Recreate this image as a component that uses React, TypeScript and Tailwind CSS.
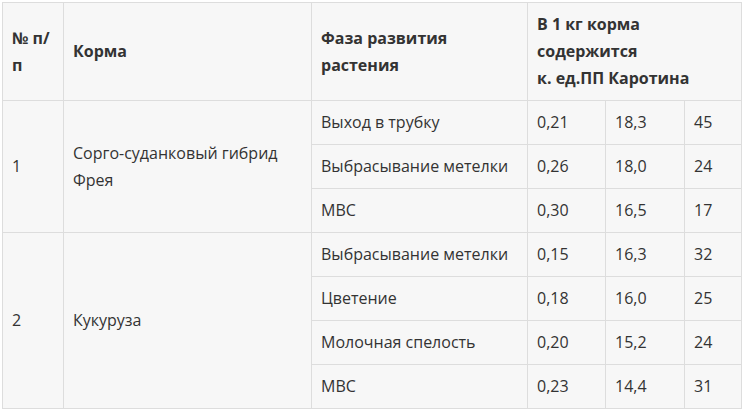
const rows = [
  {
    num: '1',
    name: 'Сорго-суданковый гибрид Фрея',
    phases: [
      ['Выход в трубку', '0,21', '18,3', '45'],
      ['Выбрасывание метелки', '0,26', '18,0', '24'],
      ['МВС', '0,30', '16,5', '17'],
    ],
  },
  {
    num: '2',
    name: 'Кукуруза',
    phases: [
      ['Выбрасывание метелки', '0,15', '16,3', '32'],
      ['Цветение', '0,18', '16,0', '25'],
      ['Молочная спелость', '0,20', '15,2', '24'],
      ['МВС', '0,23', '14,4', '31'],
    ],
  },
]

const cell = 'border border-[#dddddd] pl-[9px] pr-[8px] py-2 align-middle'

export default function App() {
  return (
    <div className="w-[745px] h-[411px] bg-white pt-[2px] pl-[2px] font-['Open_Sans',sans-serif] text-[16px] leading-[27px] text-[#333333]">
      <table className="table-fixed border-collapse bg-[#f7f7f7] w-[739px]">
        <colgroup>
          <col className="w-[61px]" />
          <col className="w-[248px]" />
          <col className="w-[216px]" />
          <col className="w-[78px]" />
          <col className="w-[79px]" />
          <col className="w-[57px]" />
        </colgroup>
        <thead>
          <tr className="font-semibold text-left">
            <th className={cell}>№ п/п</th>
            <th className={cell}>Корма</th>
            <th className={cell}>
              Фаза развития
              <br />
              растения
            </th>
            <th className={cell} colSpan={3}>
              В 1 кг корма
              <br />
              содержится
              <br />
              к. ед.ПП Каротина
            </th>
          </tr>
        </thead>
        <tbody>
          {rows.map((group) =>
            group.phases.map((p, i) => (
              <tr key={group.num + i}>
                {i === 0 && (
                  <>
                    <td className={cell} rowSpan={group.phases.length}>
                      {group.num}
                    </td>
                    <td className={cell} rowSpan={group.phases.length}>
                      {group.name}
                    </td>
                  </>
                )}
                {p.map((v, j) => (
                  <td key={j} className={`${cell} whitespace-nowrap`}>
                    {v}
                  </td>
                ))}
              </tr>
            ))
          )}
        </tbody>
      </table>
    </div>
  )
}
